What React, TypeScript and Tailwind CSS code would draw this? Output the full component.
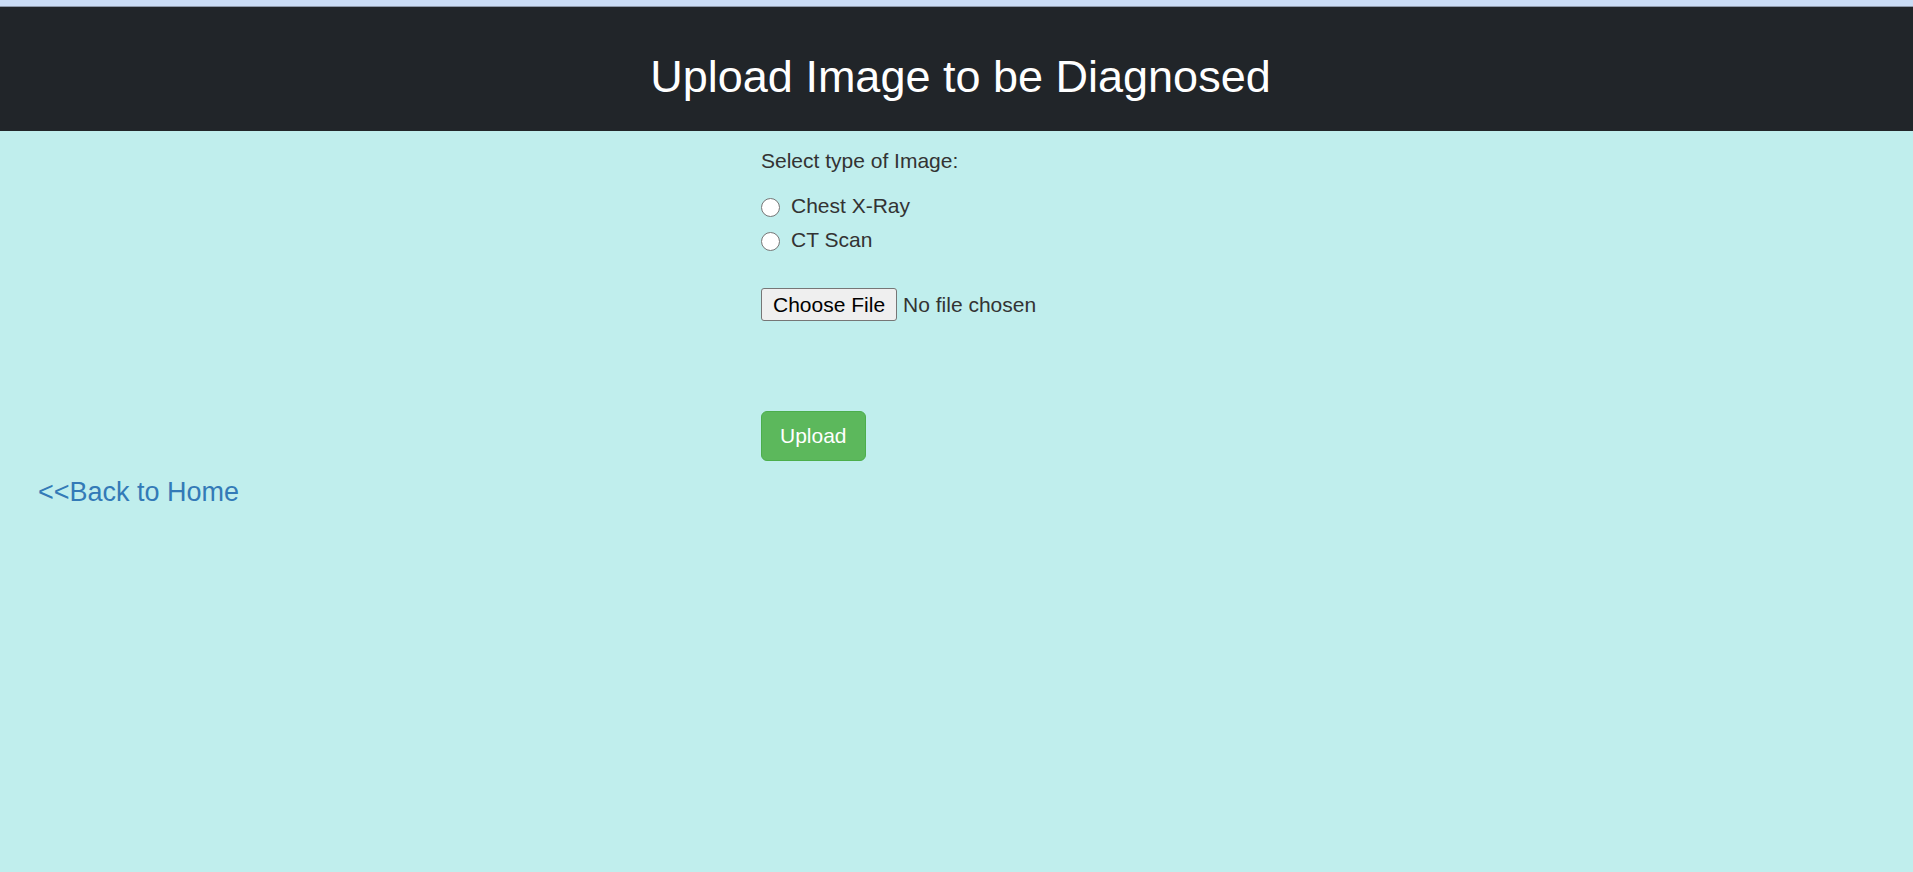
import { useState } from 'react'

const IMAGE_TYPES = [
  { id: 'xray', label: 'Chest X-Ray' },
  { id: 'ct', label: 'CT Scan' },
]

export default function App() {
  const [type, setType] = useState('')
  const [fileName, setFileName] = useState('')

  return (
    <div className="min-h-screen bg-[#c0eeed] font-['Liberation_Sans',Arial,sans-serif] text-[#333]">
      <div className="h-[6px] bg-[#cadcf5]" />
      <div className="h-px bg-[#8e99ab]" />

      <header className="h-[124px] bg-[#212529] pt-[45px] pl-[8px] text-center">
        <h2 className="text-[45px] leading-[50px] text-white">Upload Image to be Diagnosed</h2>
      </header>

      <main className="flex flex-col">
        <form className="ml-[761px] mt-[15px] flex flex-col items-start text-[21px] leading-[30px]" onSubmit={(e) => e.preventDefault()}>
          <label>Select type of Image:</label>

          <div className="mt-[15px] flex flex-col gap-[4px]">
            {IMAGE_TYPES.map((t) => (
              <label key={t.id} className="flex h-[30px] items-center gap-[11px] cursor-pointer">
                <input
                  type="radio"
                  name="imageType"
                  value={t.id}
                  checked={type === t.id}
                  onChange={() => setType(t.id)}
                  className="mt-[2px] h-[19px] w-[19px] appearance-none rounded-full border-[1.5px] border-[#767676] bg-white checked:border-[6px] checked:border-[#0075ff]"
                />
                {t.label}
              </label>
            ))}
          </div>

          <div className="mt-[33px] flex items-center gap-[6px]">
            <label className="flex h-[33px] cursor-pointer items-center rounded-[3px] border border-[#767676] bg-[#efefef] px-[11px] text-black">
              Choose File
              <input
                type="file"
                className="hidden"
                onChange={(e) => setFileName(e.target.files?.[0]?.name ?? '')}
              />
            </label>
            <span>{fileName || 'No file chosen'}</span>
          </div>

          <button
            type="submit"
            className="mt-[90px] rounded-[6px] border-[1.5px] border-[#4cae4c] bg-[#5cb85c] px-[18px] py-[9px] text-white"
          >
            Upload
          </button>
        </form>

        <a href="#" className="ml-[38px] mt-[12px] self-start text-[27px] leading-[38.6px] text-[#337ab7]">
          &lt;&lt;Back to Home
        </a>
      </main>
    </div>
  )
}
